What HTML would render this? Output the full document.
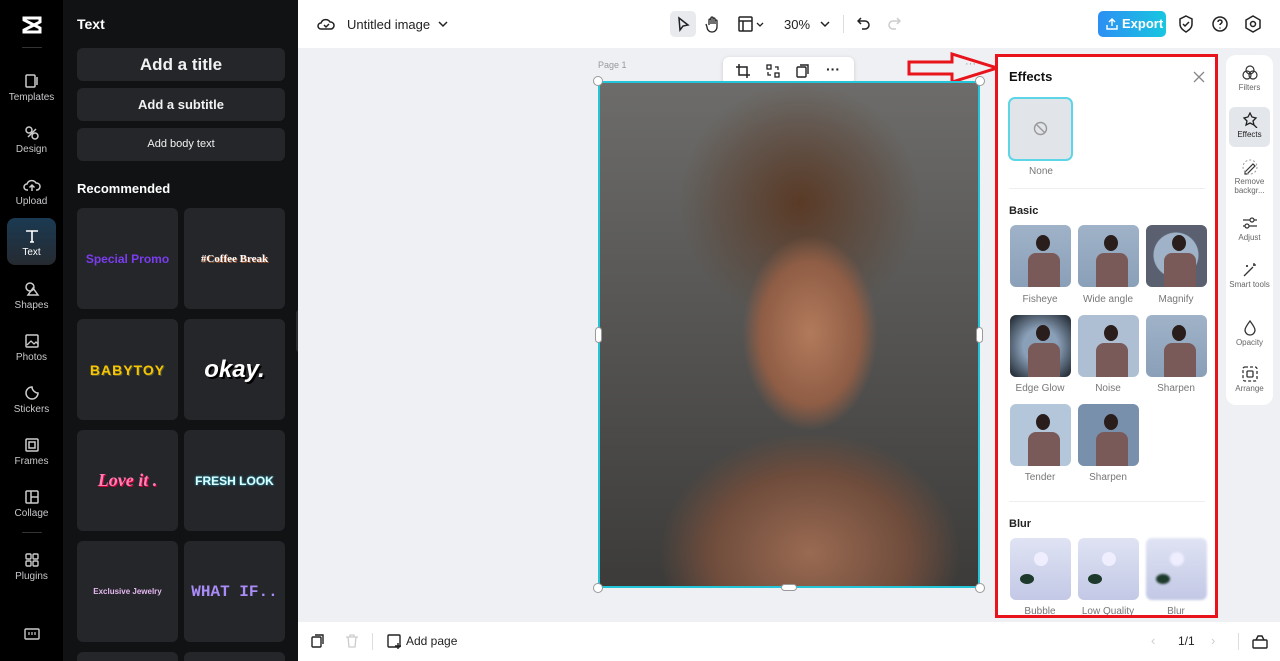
<!DOCTYPE html>
<html style="width:1280px;height:661px;overflow:hidden"><head><meta charset="utf-8"><style>
*{box-sizing:border-box;margin:0;padding:0}
body{width:1280px;height:661px;overflow:hidden;font-family:"Liberation Sans",sans-serif;background:#eef0f3;position:relative}
.a{position:absolute}
.rail{left:0;top:0;width:63px;height:661px;background:#000}
.ri{position:absolute;left:0;width:63px;text-align:center;color:#c8c8cc;font-size:10px}
.ri svg{display:block;margin:0 auto 3px}
.panel{left:63px;top:0;width:235px;height:661px;background:#111214;overflow:hidden}
.btn{position:absolute;left:14px;width:208px;height:33px;background:#25262a;border-radius:6px;color:#f2f2f2;text-align:center;font-weight:bold}
.tile{position:absolute;width:101px;height:101px;background:#25262a;border-radius:6px;display:flex;align-items:center;justify-content:center;font-weight:bold}
.top{left:298px;top:0;width:982px;height:48px;background:#fff}
.bot{left:298px;top:622px;width:982px;height:39px;background:#fff}
.eff{left:995px;top:54px;width:223px;height:564px;background:#fff;border:3px solid #e8131b;overflow:hidden}
.th{position:absolute;width:61px;height:62px;border-radius:6px;overflow:hidden}
.lb{position:absolute;width:80px;text-align:center;font-size:10px;color:#777}
.man{background:linear-gradient(180deg,#9fb2c8,#8aa0b8);}
.man::after{content:"";position:absolute;left:18px;top:28px;width:32px;height:34px;background:#7a5a58;border-radius:8px 8px 0 0}
.man::before{content:"";position:absolute;left:26px;top:10px;width:14px;height:16px;background:#2a1e1c;border-radius:50%;z-index:1}
.rose{background:linear-gradient(180deg,#dfe3f3,#c3c8e6)}
.rose::after{content:"";position:absolute;left:24px;top:14px;width:14px;height:14px;background:#eef;border-radius:50%}
.rose::before{content:"";position:absolute;left:10px;top:36px;width:14px;height:10px;background:#1d3a2c;border-radius:50%}
.rrl{position:absolute;left:0;width:47px;text-align:center;font-size:8px;color:#666;line-height:9px}
.rrl svg{display:block;margin:0 auto 2px}
</style></head><body>
<div class="a rail">
  <div class="ri" style="top:16px"><svg width="22" height="18" viewBox="0 0 22 18"><path d="M3 2h16v4L3 14v2h16v-4L3 4z" fill="none" stroke="#fff" stroke-width="3"/></svg></div>
  <div class="a" style="left:22px;top:47px;width:20px;height:1px;background:#333"></div>
  <div class="ri" style="top:73px"><svg width="16" height="16"><rect x="2" y="2" width="9" height="12" rx="1" fill="none" stroke="#ccc" stroke-width="1.5"/><path d="M13 4v8" stroke="#ccc" stroke-width="1.5"/></svg>Templates</div>
  <div class="ri" style="top:125px"><svg width="16" height="16"><circle cx="5" cy="5" r="3" fill="none" stroke="#ccc" stroke-width="1.5"/><circle cx="11" cy="11" r="3" fill="none" stroke="#ccc" stroke-width="1.5"/><path d="M4 12l8-8" stroke="#ccc" stroke-width="1.5"/></svg>Design</div>
  <div class="ri" style="top:177px"><svg width="18" height="16"><path d="M5 13H4a3 3 0 010-6 5 5 0 019-1 3.5 3.5 0 011 7h-1M9 14V8M6.5 10.5L9 8l2.5 2.5" fill="none" stroke="#ccc" stroke-width="1.5"/></svg>Upload</div>
  <div class="a" style="left:7px;top:218px;width:49px;height:47px;border-radius:8px;background:linear-gradient(180deg,#1b3a52,#252a30)"></div>
  <div class="ri" style="top:228px;color:#fff"><svg width="16" height="16"><path d="M2 3h12M8 3v11M6 14h4" stroke="#fff" stroke-width="1.6" fill="none"/></svg>Text</div>
  <div class="ri" style="top:281px"><svg width="16" height="16"><circle cx="6" cy="6" r="4" fill="none" stroke="#ccc" stroke-width="1.5"/><path d="M9 7l5 7H4z" fill="none" stroke="#ccc" stroke-width="1.5"/></svg>Shapes</div>
  <div class="ri" style="top:333px"><svg width="16" height="16"><rect x="2" y="2" width="12" height="12" rx="1" fill="none" stroke="#ccc" stroke-width="1.5"/><path d="M3 12l4-4 3 3 2-2 2 2" fill="none" stroke="#ccc" stroke-width="1.3"/></svg>Photos</div>
  <div class="ri" style="top:385px"><svg width="16" height="16"><path d="M14 8a6 6 0 11-6-6c0 3 3 6 6 6z" fill="none" stroke="#ccc" stroke-width="1.5"/></svg>Stickers</div>
  <div class="ri" style="top:437px"><svg width="16" height="16"><rect x="2" y="2" width="12" height="12" rx="1" fill="none" stroke="#ccc" stroke-width="1.5"/><rect x="5" y="5" width="6" height="6" fill="none" stroke="#ccc" stroke-width="1.5"/></svg>Frames</div>
  <div class="ri" style="top:489px"><svg width="16" height="16"><rect x="2" y="2" width="12" height="12" rx="1" fill="none" stroke="#ccc" stroke-width="1.5"/><path d="M7 2v12M7 8h7" stroke="#ccc" stroke-width="1.5"/></svg>Collage</div>
  <div class="a" style="left:22px;top:532px;width:20px;height:1px;background:#333"></div>
  <div class="ri" style="top:552px"><svg width="16" height="16"><rect x="2" y="2" width="5" height="5" rx="1" fill="none" stroke="#ccc" stroke-width="1.4"/><rect x="9" y="2" width="5" height="5" rx="1" fill="none" stroke="#ccc" stroke-width="1.4"/><rect x="2" y="9" width="5" height="5" rx="1" fill="none" stroke="#ccc" stroke-width="1.4"/><rect x="9" y="9" width="5" height="5" rx="1" fill="none" stroke="#ccc" stroke-width="1.4"/></svg>Plugins</div>
  <div class="ri" style="top:627px"><svg width="16" height="14"><rect x="1" y="2" width="14" height="10" rx="1" fill="none" stroke="#ccc" stroke-width="1.4"/><path d="M5 5v3M8 5v3M11 5v3" stroke="#ccc" stroke-width="1.2"/></svg></div>
</div>
<div class="a panel">
  <div class="a" style="left:14px;top:16px;color:#fff;font-weight:bold;font-size:14px">Text</div>
  <div class="btn" style="top:48px;font-size:17px;line-height:33px">Add a title</div>
  <div class="btn" style="top:88px;font-size:13px;line-height:33px">Add a subtitle</div>
  <div class="btn" style="top:128px;font-size:11px;line-height:33px;font-weight:normal">Add body text</div>
  <div class="a" style="left:14px;top:181px;color:#fff;font-weight:bold;font-size:13px">Recommended</div>
  <div class="tile" style="left:14px;top:208px;color:#7b3cf0;font-size:12px">Special Promo</div>
  <div class="tile" style="left:121px;top:208px;color:#fff;font-family:'Liberation Serif',serif;font-size:11px;text-shadow:1px 1px #a0522d">#Coffee Break</div>
  <div class="tile" style="left:14px;top:319px;color:#f7c600;font-size:14px;letter-spacing:1px;text-shadow:1px 1px #553">BABYTOY</div>
  <div class="tile" style="left:121px;top:319px;color:#fff;font-size:24px;font-style:italic;text-shadow:2px 2px #000">okay.</div>
  <div class="tile" style="left:14px;top:430px;color:#ff7eb6;font-family:'Liberation Serif',serif;font-size:18px;font-style:italic;text-shadow:1px 1px #c03">Love it .</div>
  <div class="tile" style="left:121px;top:430px;color:#dff;font-size:12px;text-shadow:0 0 2px #2bd">FRESH LOOK</div>
  <div class="tile" style="left:14px;top:541px;color:#e4b8f0;font-size:8px">Exclusive Jewelry</div>
  <div class="tile" style="left:121px;top:541px;color:#a98cf7;font-size:16px;font-family:'Liberation Mono',monospace">WHAT IF..</div>
  <div class="tile" style="left:14px;top:652px;height:9px;border-radius:6px 6px 0 0"></div><div class="tile" style="left:121px;top:652px;height:9px;border-radius:6px 6px 0 0"></div>
  <div class="a" style="left:233px;top:310px;width:6px;height:42px;background:#2a2b2f;border-radius:3px"></div>
</div>
<div class="a top">
  <svg class="a" style="left:19px;top:16px" width="18" height="16"><path d="M5 13H4a3 3 0 010-6 5 5 0 019-1 3.5 3.5 0 011 7H5z M7 9l2 2 3-3" fill="none" stroke="#222" stroke-width="1.5"/></svg>
  <div class="a" style="left:49px;top:17px;font-size:13px;color:#222">Untitled image</div>
  <svg class="a" style="left:140px;top:20px" width="10" height="8"><path d="M1 2l4 4 4-4" fill="none" stroke="#222" stroke-width="1.5"/></svg>
  <div class="a" style="left:372px;top:11px;width:26px;height:26px;background:#e8eaee;border-radius:5px"></div>
  <svg class="a" style="left:378px;top:16px" width="14" height="16"><path d="M3 2l9 7-5 1-3 4z" fill="none" stroke="#222" stroke-width="1.5"/></svg>
  <svg class="a" style="left:407px;top:15px" width="16" height="18"><path d="M4 10V5a1 1 0 012 0v4V3a1 1 0 012 0v6V4a1 1 0 012 0v5-3a1 1 0 012 0v6a5 5 0 01-10 0l-1-3" fill="none" stroke="#222" stroke-width="1.3"/></svg>
  <svg class="a" style="left:440px;top:16px" width="28" height="16"><rect x="1" y="1" width="13" height="14" rx="1" fill="none" stroke="#222" stroke-width="1.5"/><path d="M1 5h13M5 5v10" stroke="#222" stroke-width="1.5"/><path d="M19 7l3 3 3-3" fill="none" stroke="#222" stroke-width="1.3"/></svg>
  <div class="a" style="left:486px;top:17px;font-size:13px;color:#222">30%</div>
  <svg class="a" style="left:522px;top:20px" width="10" height="8"><path d="M1 2l4 4 4-4" fill="none" stroke="#222" stroke-width="1.5"/></svg>
  <div class="a" style="left:545px;top:15px;width:1px;height:18px;background:#ddd"></div>
  <svg class="a" style="left:559px;top:16px" width="14" height="16"><path d="M4 2L1 5l3 3M1 5h7a4 4 0 010 8H5" fill="none" stroke="#222" stroke-width="1.5"/></svg>
  <svg class="a" style="left:589px;top:16px" width="14" height="16"><path d="M10 2l3 3-3 3M13 5H6a4 4 0 000 8h3" fill="none" stroke="#ccc" stroke-width="1.5"/></svg>
  <div class="a" style="left:800px;top:11px;width:68px;height:26px;border-radius:5px;background:linear-gradient(90deg,#2c8ff3,#19c6e0);color:#fff;font-size:13px;font-weight:bold;line-height:26px;padding-left:24px">Export</div>
  <svg class="a" style="left:808px;top:17px" width="12" height="13"><path d="M6 9V2M3 5l3-3 3 3M1 8v4h10V8" fill="none" stroke="#fff" stroke-width="1.4"/></svg>
  <svg class="a" style="left:880px;top:15px" width="16" height="18"><path d="M8 1l6 3v5c0 4-3 6-6 8-3-2-6-4-6-8V4z M5 9l2 2 4-4" fill="none" stroke="#222" stroke-width="1.5"/></svg>
  <svg class="a" style="left:913px;top:15px" width="18" height="18"><circle cx="9" cy="9" r="7" fill="none" stroke="#222" stroke-width="1.5"/><path d="M7 7a2 2 0 114 0c0 1.5-2 1.5-2 3M9 12.5v1" fill="none" stroke="#222" stroke-width="1.5"/></svg>
  <svg class="a" style="left:946px;top:15px" width="18" height="18"><path d="M9 1l7 4v8l-7 4-7-4V5z" fill="none" stroke="#222" stroke-width="1.5"/><circle cx="9" cy="9" r="2.5" fill="none" stroke="#222" stroke-width="1.5"/></svg>
</div>
<div class="a" style="left:598px;top:60px;font-size:9px;color:#999">Page 1</div>
<div class="a" style="left:723px;top:57px;width:131px;height:28px;background:#fff;border-radius:6px;box-shadow:0 1px 4px rgba(0,0,0,.15)">
  <svg class="a" style="left:13px;top:7px" width="14" height="14"><path d="M3 0v11h11M0 3h11v11" fill="none" stroke="#222" stroke-width="1.5"/></svg>
  <svg class="a" style="left:43px;top:7px" width="14" height="14"><rect x="1" y="1" width="4" height="4" fill="none" stroke="#222" stroke-width="1.3"/><rect x="9" y="9" width="4" height="4" fill="none" stroke="#222" stroke-width="1.3"/><path d="M9 3h3v3M5 11H2V8" fill="none" stroke="#222" stroke-width="1.3"/></svg>
  <svg class="a" style="left:73px;top:7px" width="14" height="14"><rect x="1" y="3" width="9" height="10" rx="1" fill="none" stroke="#222" stroke-width="1.4"/><path d="M4 1h8v9" fill="none" stroke="#222" stroke-width="1.4"/></svg>
  <div class="a" style="left:103px;top:4px;font-size:14px;font-weight:bold;color:#222">···</div>
</div>
<div class="a" style="left:965px;top:58px;font-size:11px;color:#999">···</div>
<svg class="a" style="left:907px;top:52px" width="90" height="32"><path d="M2 10h43V2l45 14-45 14v-8H2z" fill="none" stroke="#e8131b" stroke-width="3"/></svg>
<div class="a" style="left:598px;top:81px;width:382px;height:507px;border:2px solid #22c6d8;background:radial-gradient(ellipse 90px 130px at 210px 250px,#b27a5c 0%,#8f5d45 55%,transparent 75%),radial-gradient(ellipse 200px 160px at 210px 470px,#9a6a52 0%,#6e4c3c 50%,transparent 75%),radial-gradient(ellipse 150px 150px at 200px 120px,#5a3a26 0%,transparent 80%),linear-gradient(180deg,#6d6c6a,#3c3b39)"></div>
<div class="a" style="left:593px;top:76px;width:10px;height:10px;border-radius:50%;background:#fff;border:1px solid #999"></div>
<div class="a" style="left:975px;top:76px;width:10px;height:10px;border-radius:50%;background:#fff;border:1px solid #999"></div>
<div class="a" style="left:593px;top:583px;width:10px;height:10px;border-radius:50%;background:#fff;border:1px solid #999"></div>
<div class="a" style="left:975px;top:583px;width:10px;height:10px;border-radius:50%;background:#fff;border:1px solid #999"></div>
<div class="a" style="left:595px;top:327px;width:7px;height:16px;border-radius:4px;background:#fff;border:1px solid #999"></div>
<div class="a" style="left:976px;top:327px;width:7px;height:16px;border-radius:4px;background:#fff;border:1px solid #999"></div>
<div class="a" style="left:781px;top:584px;width:16px;height:7px;border-radius:4px;background:#fff;border:1px solid #999"></div>
<div class="a eff">
  <div class="a" style="left:11px;top:12px;font-size:13px;font-weight:bold;color:#111">Effects</div>
  <svg class="a" style="left:195px;top:14px" width="12" height="12"><path d="M1 1l10 10M11 1L1 11" stroke="#888" stroke-width="1.3"/></svg>
  <div class="a" style="left:10px;top:40px;width:65px;height:64px;border:2px solid #5cd6e6;border-radius:7px;background:#e1e4e8;padding:2px"></div>
  <svg class="a" style="left:35px;top:64px" width="15" height="15"><circle cx="7.5" cy="7.5" r="6" fill="none" stroke="#999" stroke-width="1.4"/><path d="M3.5 3.5l8 8" stroke="#999" stroke-width="1.4"/></svg>
  <div class="lb" style="left:3px;top:109px">None</div>
  <div class="a" style="left:11px;top:131px;width:196px;height:1px;background:#eee"></div>
  <div class="a" style="left:11px;top:148px;font-size:11px;font-weight:bold;color:#222">Basic</div>
  <div class="th man" style="left:12px;top:168px"></div><div class="lb" style="left:2px;top:237px">Fisheye</div>
  <div class="th man" style="left:80px;top:168px"></div><div class="lb" style="left:70px;top:237px">Wide angle</div>
  <div class="th man" style="left:148px;top:168px;background:radial-gradient(circle at 30px 30px,#9fb2c8 22px,#5a6070 23px)"></div><div class="lb" style="left:138px;top:237px">Magnify</div>
  <div class="th man" style="left:12px;top:258px;background:radial-gradient(circle,#8aa0b8 40%,#1a2028)"></div><div class="lb" style="left:2px;top:326px">Edge Glow</div>
  <div class="th man" style="left:80px;top:258px;background:#aebfd3"></div><div class="lb" style="left:70px;top:326px">Noise</div>
  <div class="th man" style="left:148px;top:258px"></div><div class="lb" style="left:138px;top:326px">Sharpen</div>
  <div class="th man" style="left:12px;top:347px;background:#b4c7da"></div><div class="lb" style="left:2px;top:415px">Tender</div>
  <div class="th man" style="left:80px;top:347px;background:#7890ac"></div><div class="lb" style="left:70px;top:415px">Sharpen</div>
  <div class="a" style="left:11px;top:444px;width:196px;height:1px;background:#eee"></div>
  <div class="a" style="left:11px;top:461px;font-size:11px;font-weight:bold;color:#222">Blur</div>
  <div class="th rose" style="left:12px;top:481px"></div><div class="lb" style="left:2px;top:549px">Bubble</div>
  <div class="th rose" style="left:80px;top:481px"></div><div class="lb" style="left:70px;top:549px">Low Quality</div>
  <div class="th rose" style="left:148px;top:481px;filter:blur(1px)"></div><div class="lb" style="left:138px;top:549px">Blur</div>
</div>
<div class="a" style="left:1226px;top:55px;width:47px;height:350px;background:#fff;border-radius:10px">
  <div class="rrl" style="top:10px"><svg width="16" height="16"><circle cx="8" cy="5" r="4" fill="none" stroke="#333" stroke-width="1.2"/><circle cx="5" cy="10" r="4" fill="none" stroke="#333" stroke-width="1.2"/><circle cx="11" cy="10" r="4" fill="none" stroke="#333" stroke-width="1.2"/></svg>Filters</div>
  <div class="a" style="left:3px;top:52px;width:41px;height:40px;background:#e3e6ea;border-radius:6px"></div>
  <div class="rrl" style="top:57px;color:#222"><svg width="16" height="16"><path d="M8 1l2 4 4 1-3 3 1 4-4-2-4 2 1-4-3-3 4-1z M12 13l3 3" fill="none" stroke="#222" stroke-width="1.3"/></svg>Effects</div>
  <div class="rrl" style="top:104px"><svg width="16" height="16"><path d="M3 13l8-8 2 2-8 8H3z" fill="none" stroke="#333" stroke-width="1.2"/><circle cx="8" cy="8" r="7" fill="none" stroke="#999" stroke-width="1" stroke-dasharray="2 2"/></svg>Remove backgr...</div>
  <div class="rrl" style="top:160px"><svg width="16" height="16"><path d="M1 5h14M1 11h14" stroke="#333" stroke-width="1.2"/><circle cx="10" cy="5" r="2" fill="#fff" stroke="#333" stroke-width="1.2"/><circle cx="5" cy="11" r="2" fill="#fff" stroke="#333" stroke-width="1.2"/></svg>Adjust</div>
  <div class="rrl" style="top:207px"><svg width="16" height="16"><path d="M2 14L11 5M12 1v3M14 3h-3M5 3v2M4 4h2" stroke="#333" stroke-width="1.3"/></svg>Smart tools</div>
  <div class="rrl" style="top:265px"><svg width="16" height="16"><path d="M8 1C5 5 3 8 3 10a5 5 0 0010 0c0-2-2-5-5-9z" fill="none" stroke="#333" stroke-width="1.3"/></svg>Opacity</div>
  <div class="rrl" style="top:311px"><svg width="16" height="16"><rect x="1" y="1" width="14" height="14" rx="2" fill="none" stroke="#333" stroke-width="1.3" stroke-dasharray="3 2"/><rect x="5" y="5" width="6" height="6" rx="1" fill="none" stroke="#333" stroke-width="1.3"/></svg>Arrange</div>
</div>
<div class="a bot">
  <svg class="a" style="left:13px;top:12px" width="14" height="14"><rect x="1" y="3" width="9" height="10" rx="1" fill="none" stroke="#222" stroke-width="1.4"/><path d="M4 1h8v9" fill="none" stroke="#222" stroke-width="1.4"/></svg>
  <svg class="a" style="left:47px;top:12px" width="14" height="14"><path d="M1 3h12M5 3V1h4v2M3 3l1 10h6l1-10" fill="none" stroke="#ccc" stroke-width="1.3"/></svg>
  <div class="a" style="left:74px;top:11px;width:1px;height:17px;background:#ddd"></div>
  <svg class="a" style="left:89px;top:12px" width="15" height="15"><rect x="1" y="1" width="12" height="12" rx="1" fill="none" stroke="#222" stroke-width="1.4"/><path d="M11 9v6M8 12h6" stroke="#222" stroke-width="1.4"/></svg>
  <div class="a" style="left:108px;top:12px;font-size:12px;color:#222">Add page</div>
  <div class="a" style="left:853px;top:11px;font-size:13px;color:#ccc">‹</div>
  <div class="a" style="left:880px;top:12px;font-size:12px;color:#222">1/1</div>
  <div class="a" style="left:913px;top:11px;font-size:13px;color:#ccc">›</div>
  <div class="a" style="left:940px;top:11px;width:1px;height:17px;background:#ddd"></div>
  <svg class="a" style="left:954px;top:12px" width="16" height="15"><rect x="1" y="6" width="14" height="8" rx="1" fill="none" stroke="#222" stroke-width="1.4"/><path d="M4 6l2-4h4l2 4" fill="none" stroke="#222" stroke-width="1.4"/></svg>
</div>
</body></html>
